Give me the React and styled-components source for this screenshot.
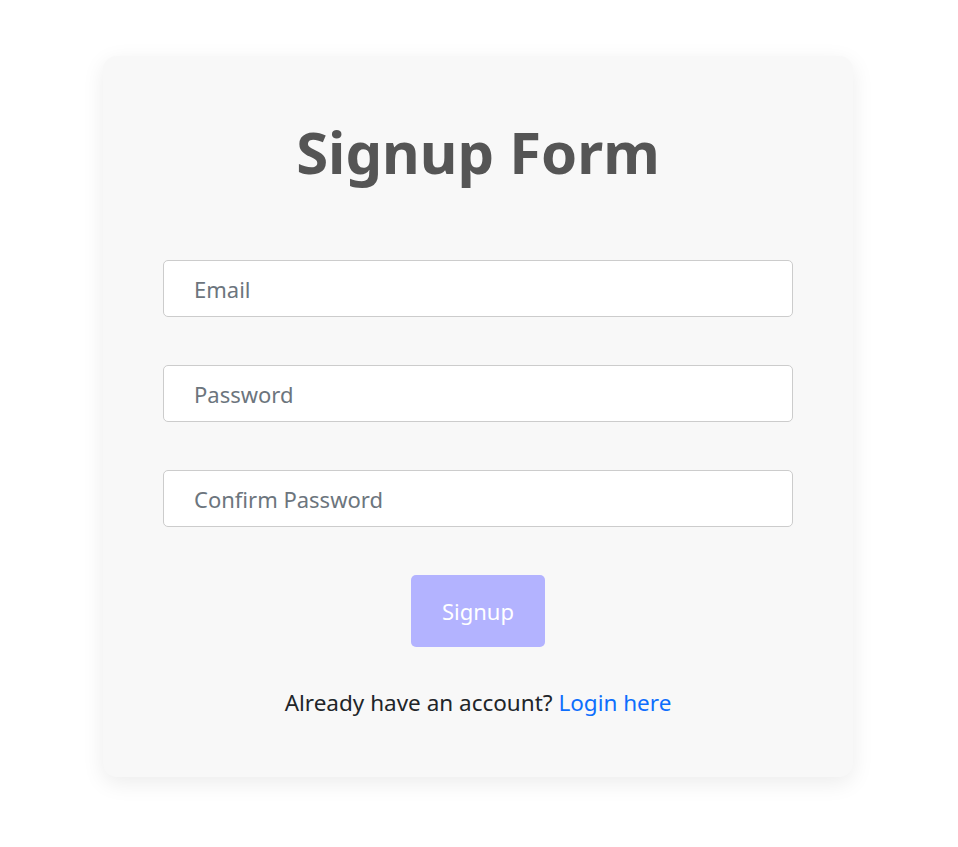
import React from 'react';
import styled, { createGlobalStyle } from 'styled-components';

const GlobalStyle = createGlobalStyle`
    body{
        margin: 0;
        background: #fff;
        font-family: "Noto Sans", "Open Sans", sans-serif;
    }
`;

const Page = styled.div`
    padding: 56px 2px 70px 0;
    display: flex;
    justify-content: center;
`;

const Card = styled.div`
    width: 750px;
    box-sizing: border-box;
    padding: 60px 60px 58px;
    background-color: #f8f8f8;
    border-radius: 14px;
    box-shadow: 0 6px 22px rgba(0, 0, 0, 0.08);
    display: flex;
    flex-direction: column;
    align-items: center;
`;

const Title = styled.h1`
    margin: 0 0 72px;
    font-size: 58px;
    line-height: 72px;
    font-weight: 700;
    color: #555;
`;

const Form = styled.form`
    width: 100%;
    display: flex;
    flex-direction: column;
    gap: 48px;
    align-items: center;
`;

const Input = styled.input`
    width: 100%;
    height: 57px;
    box-sizing: border-box;
    padding: 0 30px;
    border: 1px solid #ccc;
    border-radius: 5px;
    background: #fff;
    font-family: inherit;
    font-size: 22px;
    color: #212529;

    &::placeholder{
        color: #6c757d;
    }
`;

const Button = styled.button`
    width: 134px;
    height: 72px;
    border: none;
    border-radius: 5px;
    background-color: #b3b3ff;
    color: #fff;
    font-family: inherit;
    font-size: 22px;
`;

const Footer = styled.p`
    margin: 39px 0 0;
    font-size: 22.5px;
    line-height: 33px;
    color: #212529;

    a{
        color: #0d6efd;
        text-decoration: none;
    }
`;

const App = () => {
    return (
        <>
            <GlobalStyle />
            <Page>
                <Card>
                    <Title>Signup Form</Title>
                    <Form onSubmit={e => e.preventDefault()}>
                        <Input type="email" placeholder="Email" />
                        <Input type="password" placeholder="Password" />
                        <Input type="password" placeholder="Confirm Password" />
                        <Button type="submit">Signup</Button>
                    </Form>
                    <Footer>Already have an account? <a href="#">Login here</a></Footer>
                </Card>
            </Page>
        </>
    );
}

export default App;
